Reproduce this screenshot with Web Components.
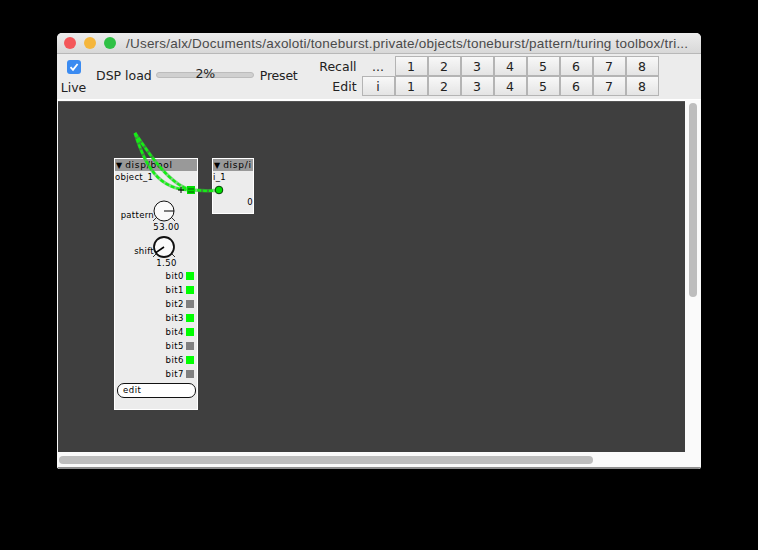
<!DOCTYPE html>
<html>
<head>
<meta charset="utf-8">
<style>
  html, body { margin: 0; padding: 0; background: #000; }
  body { padding: 33px 57px 0; height: 517px; overflow: hidden; }
</style>
</head>
<body>
<ax-window title="/Users/alx/Documents/axoloti/toneburst.private/objects/toneburst/pattern/turing toolbox/tri...">
  <ax-toolbar></ax-toolbar>
  <ax-canvas>
    <ax-object style="left:56px;top:57px;width:84px;height:252px" type="disp/bool" name="object_1">
      <ax-dial style="margin-top:16px" label="pattern" value="53.00" angle="90" heavy="0"></ax-dial>
      <ax-dial style="margin-bottom:-2px" label="shift" value="1.50" angle="-125" heavy="1"></ax-dial>
      <ax-led label="bit0" on></ax-led>
      <ax-led label="bit1" on></ax-led>
      <ax-led label="bit2"></ax-led>
      <ax-led label="bit3" on></ax-led>
      <ax-led label="bit4" on></ax-led>
      <ax-led label="bit5"></ax-led>
      <ax-led label="bit6" on></ax-led>
      <ax-led label="bit7"></ax-led>
      <ax-edit-field>edit</ax-edit-field>
    </ax-object>
    <ax-object style="left:154px;top:57px;width:42px;height:56px" type="disp/i" name="i_1">
      <ax-readout>0</ax-readout>
    </ax-object>
    <ax-wires></ax-wires>
  </ax-canvas>
</ax-window>

<script>
class AxWindow extends HTMLElement {
  constructor() {
    super();
    this.attachShadow({ mode: "open" });
    this.shadowRoot.innerHTML = `
      <style>
        :host { display: flex; flex-direction: column; width: 644px; height: 436px; background: #ececec; border-radius: 5px 5px 3px 3px; overflow: hidden; }
        #titlebar { display: flex; align-items: center; flex: none; padding-left: 7px; gap: 8px; background: linear-gradient(#ececec, #d8d8d8); border-bottom: 1px solid #b8b8b8; box-sizing: border-box; height: 21px; }
        .light { width: 12px; height: 12px; border-radius: 50%; flex: none; }
        #title { margin-left: 2px; font: 13.5px "Liberation Sans", sans-serif; letter-spacing: .21px; color: #4a4a4a; white-space: nowrap; }
      </style>
      <div id="titlebar">
        <span class="light" style="background:#f4575a"></span>
        <span class="light" style="background:#f5b63c"></span>
        <span class="light" style="background:#2fc145"></span>
        <span id="title"></span>
      </div>
      <slot></slot>
    `;
    this.shadowRoot.getElementById("title").textContent = this.getAttribute("title");
  }
}
customElements.define("ax-window", AxWindow);

class AxToolbar extends HTMLElement {
  constructor() {
    super();
    this.attachShadow({ mode: "open" });
    const nums = [1, 2, 3, 4, 5, 6, 7, 8].map((n) => `<button>${n}</button>`).join("");
    this.shadowRoot.innerHTML = `
      <style>
        :host { display: flex; flex: none; height: 46px; box-sizing: border-box; color: #222; font: 12.5px "DejaVu Sans", "Liberation Sans", sans-serif; border-bottom: 1px solid #fff; }
        #live { width: 33px; display: flex; flex-direction: column; align-items: center; padding: 6px 0 0 0; box-sizing: border-box; }
        #check { width: 14px; height: 14px; border-radius: 3px; background: #3b8bf1; display: block; margin-bottom: 6px; }
        #load { display: flex; align-items: center; gap: 7px; height: 44px; margin: -1px 0 0 6px; }
        #bar { position: relative; width: 98px; height: 6px; border-radius: 3px; background: #d0d0d0; border: 1px solid #bcbcbc; box-sizing: border-box; margin: 0 -1px 0 -3px; }
        #bar span { position: absolute; left: 1px; right: 0; top: -7px; text-align: center; line-height: 16px; }
        #preset { letter-spacing: -.2px; }
        #presets { display: grid; grid-template-columns: 60px repeat(9, 33px); grid-auto-rows: 20px; margin: 2px 0 0 4px; align-items: stretch; }
        #presets b { font-weight: normal; text-align: right; padding-right: 5px; line-height: 21px; }
        button { font: inherit; color: inherit; padding: 0; margin: 0; border: 1px solid #b4b4b4; background: linear-gradient(#f8f8f8, #e4e4e4); border-radius: 0; box-sizing: border-box; }
        button.plain { border-color: transparent; background: none; }
      </style>
      <div id="live"><span id="check"><svg width="14" height="14" viewBox="0 0 14 14"><path d="M3.500 7.200 6 9.800 10.600 4" fill="none" stroke="#fff" stroke-width="1.800"/></svg></span><span>Live</span></div>
      <div id="load"><span>DSP load</span><div id="bar"><span>2%</span></div><span id="preset">Preset</span></div>
      <div id="presets">
        <b>Recall</b><button class="plain">...</button>${nums}
        <b>Edit</b><button>i</button>${nums}
      </div>
    `;
  }
}
customElements.define("ax-toolbar", AxToolbar);

class AxCanvas extends HTMLElement {
  constructor() {
    super();
    this.attachShadow({ mode: "open" });
    this.shadowRoot.innerHTML = `
      <style>
        :host { display: grid; grid-template-columns: 1fr 16px; grid-template-rows: 1fr 17px; flex: 1; min-height: 0; background: #fafafa; padding-left: 1px; }
        #patch { position: relative; background: #3f3f3f; overflow: hidden; border-top: 1px solid #fff; box-shadow: inset 0 1px 0 #555; }
        #vbar { padding: 3px 4px 0 4px; }
        #vbar div { height: 194px; background: #bdbdbd; border-radius: 4px; }
        #hbar { padding: 4px 0 0 1px; grid-column: 1 / 3; box-shadow: inset 0 -2px 0 #8e8e8e; }
        #hbar div { width: 534px; height: 8px; background: #bdbdbd; border-radius: 4px; }
      </style>
      <div id="patch"><slot></slot></div>
      <div id="vbar"><div></div></div>
      <div id="hbar"><div></div></div>
    `;
  }
}
customElements.define("ax-canvas", AxCanvas);

class AxObject extends HTMLElement {
  constructor() {
    super();
    this.attachShadow({ mode: "open" });
    this.shadowRoot.innerHTML = `
      <style>
        :host { position: absolute; box-sizing: border-box; background: #ececec; border: 1px solid #fff; font: 8.5px "DejaVu Sans", sans-serif; letter-spacing: .3px; color: #000; display: flex; flex-direction: column; }
        #head { height: 12px; background: #999; display: flex; align-items: center; padding: 1px 0 0 1px; box-sizing: border-box; font-size: 9px; letter-spacing: .75px; flex: none; line-height: 11px; overflow: hidden; white-space: nowrap; }
        #head i { font-style: normal; margin-right: 3px; font-size: 8px; letter-spacing: 0; }
        #name { height: 11px; line-height: 11px; padding-top: 1px; flex: none; }
      </style>
      <div id="head"><i>\u25BC</i><span id="type"></span></div>
      <div id="name"></div>
      <slot></slot>
    `;
    this.shadowRoot.getElementById("type").textContent = this.getAttribute("type");
    this.shadowRoot.getElementById("name").textContent = this.getAttribute("name");
  }
}
customElements.define("ax-object", AxObject);

class AxDial extends HTMLElement {
  constructor() {
    super();
    this.attachShadow({ mode: "open" });
    const heavy = this.getAttribute("heavy") === "1";
    const a = Number(this.getAttribute("angle")) * Math.PI / 180;
    const x = (11 + 10 * Math.sin(a)).toFixed(1);
    const y = (11 - 10 * Math.cos(a)).toFixed(1);
    this.shadowRoot.innerHTML = `
      <style>
        :host { display: block; height: 36px; flex: none; position: relative; }
        #row { display: flex; justify-content: flex-end; align-items: center; height: 24px; padding-right: 21px; }
        #lab { margin-right: -2px; padding-top: 8px; position: relative; z-index: 1; }
        svg { display: block; }
        #val { position: absolute; left: 33px; top: 23px; width: 37px; text-align: center; line-height: 11px; letter-spacing: .4px; }
      </style>
      <div id="row"><span id="lab"></span>
        <svg width="24" height="24" viewBox="-1 -1 24 24">
          <path d="M4 17 0 21M18 17 22 21" stroke="#333" fill="none"/>
          <circle cx="11" cy="11" r="10" fill="#fafafa" stroke="#111" stroke-width="${heavy ? 1.8 : 1}"/>
          <path d="M11 11 ${x} ${y}" stroke="#000" stroke-width="${heavy ? 1.6 : 1}"/>
        </svg>
      </div>
      <div id="val"></div>
    `;
    this.shadowRoot.getElementById("lab").textContent = this.getAttribute("label");
    this.shadowRoot.getElementById("val").textContent = this.getAttribute("value");
  }
}
customElements.define("ax-dial", AxDial);

class AxLed extends HTMLElement {
  constructor() {
    super();
    this.attachShadow({ mode: "open" });
    const on = this.hasAttribute("on");
    this.shadowRoot.innerHTML = `
      <style>
        :host { display: flex; justify-content: flex-end; align-items: center; height: 14px; flex: none; padding-right: 3px; gap: 2px; letter-spacing: .5px; }
        span { width: 8px; height: 8px; background: ${on ? "#00ff00" : "#808080"}; }
      </style>
      ${this.getAttribute("label")}<span></span>
    `;
  }
}
customElements.define("ax-led", AxLed);

class AxEditField extends HTMLElement {
  constructor() {
    super();
    this.attachShadow({ mode: "open" });
    this.shadowRoot.innerHTML = `
      <style>
        :host { display: block; height: 15px; box-sizing: border-box; margin: 2px 1px 0 2px; background: #fff; border: 1px solid #111; border-radius: 7px; padding-left: 5px; line-height: 12px; flex: none; letter-spacing: .5px; }
      </style>
      <slot></slot>
    `;
  }
}
customElements.define("ax-edit-field", AxEditField);

class AxReadout extends HTMLElement {
  constructor() {
    super();
    this.attachShadow({ mode: "open" });
    this.shadowRoot.innerHTML = `
      <style>
        :host { display: block; text-align: right; padding: 14px 0 0 0; line-height: 11px; }
      </style>
      <slot></slot>
    `;
  }
}
customElements.define("ax-readout", AxReadout);

class AxWires extends HTMLElement {
  constructor() {
    super();
    this.attachShadow({ mode: "open" });
    // coordinates are relative to the patch area, which starts at 58,101 in the photo
    const paths = ["M77 32C87 64 100 89 133 89", "M77 32C92 54 112 84 133 89", "M133 89C145 89 150 91 161 89"];
    const halo = paths.map((d) => `<path d="${d}" stroke="#35c435" stroke-width="3.400" fill="none" opacity=".6"/>`).join("");
    const dash = paths.map((d) => `<path d="${d}" stroke="#14ee14" stroke-width="2.400" stroke-dasharray="4 2" fill="none"/>`).join("");
    this.shadowRoot.innerHTML = `
      <style>
        :host { position: absolute; inset: 0; pointer-events: none; }
        svg { display: block; position: absolute; left: 0; top: 0; }
      </style>
      <svg width="627" height="350" viewBox="0 0 627 350">
        ${halo}${dash}
        <path d="M120 89h6M123 86v6" stroke="#000"/>
        <rect x="129" y="85" width="8" height="8" fill="#00e000"/>
        <path d="M130 88h6M130 91h6" stroke="#0a5a0a"/>
        <circle cx="161" cy="89" r="3.800" fill="#00e000" stroke="#0a3a0a"/>
      </svg>
    `;
  }
}
customElements.define("ax-wires", AxWires);
</script>
</body>
</html>
